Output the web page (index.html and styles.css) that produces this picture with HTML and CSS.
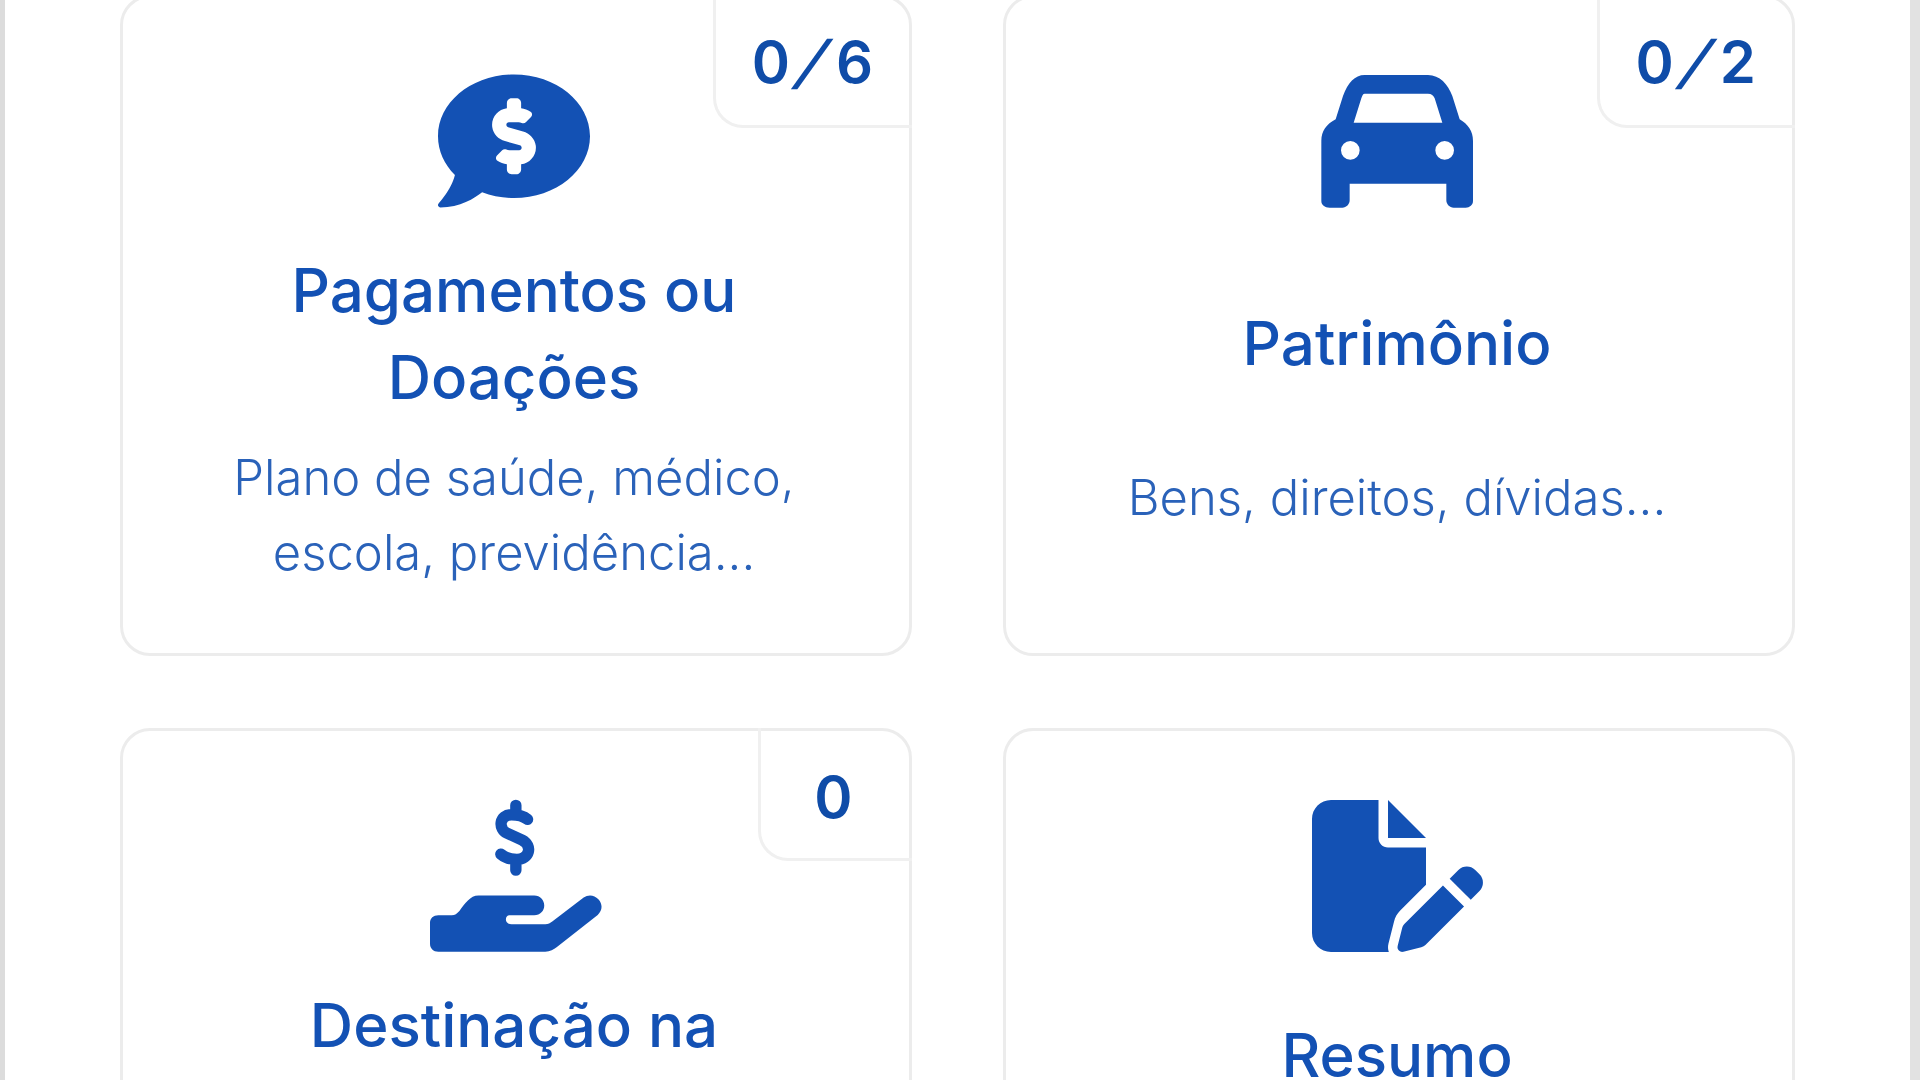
FILE: index.html
```html
<!DOCTYPE html>
<html lang="pt-BR">
<head>
  <meta charset="UTF-8">
  <meta name="viewport" content="width=device-width, initial-scale=1.0">
  <title>Declaração</title>
  <link rel="stylesheet" href="styles.css">
</head>
<body>
  <main class="page">
    <section class="cards">

      <a class="card">
        <span class="badge">0<span class="badge-slash">/</span>6</span>
        <svg class="icon" viewBox="0 0 512 512"><path d="M256 32C114.62 32 0 125.12 0 240c0 49.56 21.41 95.01 57.02 130.74C44.46 421.05 2.7 465.97 2.2 466.5A7.995 7.995 0 0 0 8 480c66.26 0 115.99-31.75 140.6-51.38C181.29 440.93 217.59 448 256 448c141.38 0 256-93.12 256-208S397.38 32 256 32zm24 302.44V352c0 8.84-7.16 16-16 16h-16c-8.84 0-16-7.16-16-16v-17.73c-11.42-1.35-22.28-5.19-31.78-11.46-6.22-4.11-6.82-13.11-1.55-18.38l17.52-17.52c3.74-3.74 9.31-4.24 14.11-2.03 3.18 1.46 6.66 2.22 10.26 2.22h32.78c4.66 0 8.44-3.78 8.44-8.42 0-3.75-2.52-7.08-6.12-8.11l-50.07-14.3c-22.25-6.35-40.01-24.71-42.91-47.67-4.05-32.07 19.03-59.43 49.32-63.05V128c0-8.84 7.16-16 16-16h16c8.84 0 16 7.16 16 16v17.73c11.42 1.35 22.28 5.19 31.78 11.46 6.22 4.11 6.82 13.11 1.55 18.38l-17.52 17.52c-3.74 3.74-9.31 4.24-14.11 2.03a24.516 24.516 0 0 0-10.26-2.22h-32.78c-4.66 0-8.44 3.78-8.44 8.42 0 3.75 2.52 7.08 6.12 8.11l50.07 14.3c22.25 6.36 40.01 24.71 42.91 47.67 4.05 32.06-19.03 59.42-49.32 63.04z"/></svg>
        <h2 class="card-title">Pagamentos ou<br>Doações</h2>
        <p class="card-text">Plano de saúde, médico,<br>escola, previdência...</p>
      </a>

      <a class="card card-short">
        <span class="badge">0<span class="badge-slash">/</span>2</span>
        <svg class="icon" viewBox="-8 12 600 456" fill-rule="evenodd"><path d="M195 42H385C420 42 445 70 458 105L480 175C505 190 520 210 520 240V420C520 432 510 440 498 440H462C450 440 440 430 440 418V368H150V418C150 430 140 440 128 440H90C75 440 65 432 65 420V240C65 210 80 190 108 175L130 105C145 65 165 42 195 42ZM195 98C190 98 188 104 185 112L162 185H428L405 112C402 104 395 98 385 98ZM152 240A28 28 0 1 0 152 296A28 28 0 1 0 152 240ZM435 240A28 28 0 1 0 435 296A28 28 0 1 0 435 240Z"/></svg>
        <h2 class="card-title">Patrimônio</h2>
        <p class="card-text">Bens, direitos, dívidas...</p>
      </a>

      <a class="card card-lower">
        <span class="badge badge-single">0</span>
        <svg class="icon" viewBox="54 30 515 455">
          <path class="dollar" d="M352 88C340 78 322 74 304 74C268 74 262 116 292 130L336 150C368 166 358 208 320 208C302 208 286 204 272 192M317 46V74M317 208V240"/>
          <path d="M205 316H372C390 316 402 330 402 346C402 362 390 375 372 375H298C288 375 284 388 290 396C293 400 298 402 304 402H405C414 402 420 399 426 394L520 322C534 312 552 314 564 327C578 342 576 362 562 374L440 470C430 478 420 484 405 484H85C70 484 60 474 60 460V398C60 384 70 375 85 375H125C135 375 140 370 148 362C165 340 180 316 205 316Z"/>
        </svg>
        <h2 class="card-title">Destinação na</h2>
      </a>

      <a class="card card-lower card-resumo">
        <svg class="icon" viewBox="0 0 576 512"><path d="M0 64C0 28.7 28.7 0 64 0H224V128c0 17.7 14.3 32 32 32H384V285.7l-86.8 86.8c-10.3 10.3-17.5 23.1-21 37.2l-18.7 74.9c-2.3 9.2-1.8 18.8 1.3 27.5H64c-35.3 0-64-28.7-64-64V64zm384 64H256V0L384 128zM549.8 235.7l14.4 14.4c15.6 15.6 15.6 40.9 0 56.6l-29.4 29.4-71-71 29.4-29.4c15.6-15.6 40.9-15.6 56.6 0zM311.9 417L441.1 287.8l71 71L382.9 487.9c-4.1 4.1-9.2 7-14.9 8.4l-60.1 15c-5.5 1.4-11.2-.2-15.2-4.2s-5.6-9.7-4.2-15.2l15-60.1c1.4-5.6 4.3-10.8 8.4-14.9z"/></svg>
        <h2 class="card-title">Resumo</h2>
      </a>

    </section>
  </main>
</body>
</html>
```
FILE: styles.css
```css
html,
body {
  margin: 0;
  padding: 0;
  height: 100%;
  overflow: hidden;
}

body {
  font-family: Inter, "Liberation Sans", sans-serif;
  background-color: #fff;
  color: #1351b4;
}

.page {
  height: 1080px;
  border-left: 5px solid #dcdcdc;
  border-right: 10px solid #e2e2e2;
  overflow: hidden;
}

.cards {
  display: grid;
  grid-template-columns: 792px 792px;
  grid-auto-rows: 661px;
  column-gap: 91px;
  row-gap: 72px;
  margin: -5px 0 0 115px;
}

.card {
  position: relative;
  display: flex;
  flex-direction: column;
  align-items: center;
  box-sizing: border-box;
  padding: 67px 4px 0 0;
  border: 3px solid #ececec;
  border-radius: 30px;
  text-align: center;
}

.card-lower {
  padding-top: 69px;
}

.badge {
  position: absolute;
  top: -3px;
  right: -3px;
  box-sizing: border-box;
  height: 133px;
  padding: 0 27px 0 36px;
  border: 3px solid #f0f0f0;
  border-top: 0;
  border-right: 0;
  border-radius: 0 30px 0 30px;
  font-size: 58px;
  font-weight: 600;
  letter-spacing: 12px;
  line-height: 134px;
  color: #0f4ca8;
}

.badge-slash {
  display: inline-block;
  transform: skewX(-24deg);
}

.badge-single {
  width: 154px;
  padding: 0 6px 0 0;
  letter-spacing: 0;
  text-align: center;
  line-height: 139px;
}

.icon {
  display: block;
  height: 152px;
  overflow: visible;
  fill: #1351b4;
}

.dollar {
  fill: none;
  stroke: #1351b4;
  stroke-width: 34px;
  stroke-linecap: round;
}

.card-title {
  margin: 30px 0 0;
  font-size: 60px;
  font-weight: 500;
  line-height: 87px;
}

.card-text {
  margin: 19px 0 0;
  font-size: 49px;
  font-weight: 300;
  line-height: 75px;
  color: #2a62b9;
}

.card-short .card-title {
  margin-top: 83px;
}

.card-short .card-text {
  margin-top: 73px;
}

.card-resumo .card-title {
  margin-top: 60px;
}
```
